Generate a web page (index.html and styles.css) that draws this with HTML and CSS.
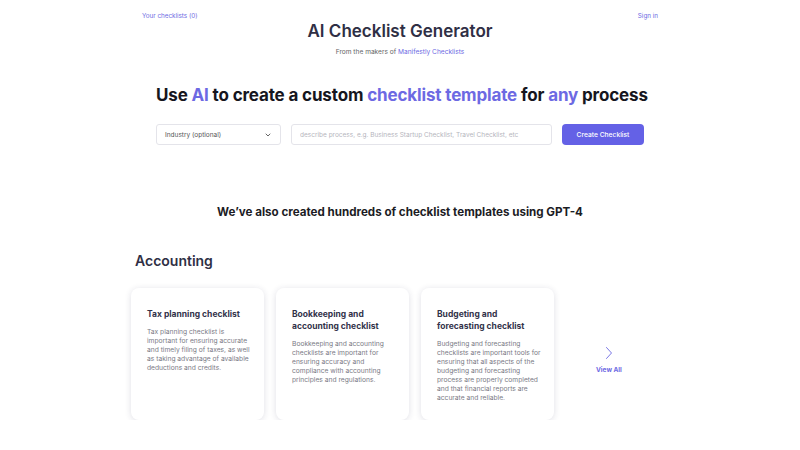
FILE: index.html
```html
<!doctype html>
<html>
<head>
    <meta charset="UTF-8">
    <title>AI Checklist Generator</title>
    <link rel="stylesheet" href="styles.css">
</head>

<body>
<header class="top">
    <nav class="top-nav">
        <a href="#">Your checklists (0)</a>
        <a href="#">Sign in</a>
    </nav>
    <h1 class="site-title">AI Checklist Generator</h1>
    <p class="makers">From the makers of <a href="#">Manifestly Checklists</a></p>
</header>

<section class="hero">
    <h2 class="headline">Use <span class="hl">AI</span> to create a custom <span class="hl">checklist template</span> for <span class="hl">any</span> process</h2>
    <form class="generator">
        <div class="industry">
            <span>Industry (optional)</span>
            <svg width="8" height="8" viewBox="0 0 8 8"><path d="M2 3l2 2 2-2" fill="none" stroke="#555" stroke-width="0.9" stroke-linecap="round" stroke-linejoin="round"/></svg>
        </div>
        <input class="process" type="text" placeholder="describe process, e.g. Business Startup Checklist, Travel Checklist, etc">
        <button class="create" type="button">Create Checklist</button>
    </form>
</section>

<h3 class="templates-title">We’ve also created hundreds of checklist templates using GPT-4</h3>

<section class="category">
    <h4 class="category-name">Accounting</h4>
    <div class="category-row">
        <div class="card">
            <h5>Tax planning checklist</h5>
            <p>Tax planning checklist is important for ensuring accurate and timely filing of taxes, as well as taking advantage of available deductions and credits.</p>
        </div>
        <div class="card">
            <h5>Bookkeeping and accounting checklist</h5>
            <p>Bookkeeping and accounting checklists are important for ensuring accuracy and compliance with accounting principles and regulations.</p>
        </div>
        <div class="card">
            <h5>Budgeting and forecasting checklist</h5>
            <p>Budgeting and forecasting checklists are important tools for ensuring that all aspects of the budgeting and forecasting process are properly completed and that financial reports are accurate and reliable.</p>
        </div>
        <a class="view-all" href="#">
            <svg width="10" height="14" viewBox="0 0 10 14"><path d="M2.5 1.5l5 5.5-5 5.5" fill="none" stroke="#7b78e6" stroke-width="1" stroke-linecap="round" stroke-linejoin="round"/></svg>
            <span>View All</span>
        </a>
    </div>
</section>

</body>
</html>
```

FILE: styles.css
```css
body {
    margin: 0;
    font-family: Inter, "Open Sans", sans-serif;
    color: #2b2b3a;
    background-color: white;
}
a {
    color: #6d69e3;
    text-decoration: none;
}
.top {
    width: 516px;
    margin: 0 auto;
    padding-top: 11px;
    text-align: center;
}
.top-nav {
    display: flex;
    justify-content: space-between;
    font-size: 6.3px;
    line-height: 10px;
}
.site-title {
    margin: 0;
    font-size: 17px;
    font-weight: 600;
    line-height: 20px;
    color: #2f2f45;
}
.makers {
    margin: 6px 0 0;
    font-size: 6.6px;
    line-height: 10px;
    color: #666;
}
.hero {
    width: 488px;
    margin: 0 auto;
    padding-top: 27px;
}
.headline {
    margin: 0;
    font-size: 17px;
    font-weight: 700;
    line-height: 22px;
    text-align: center;
    color: #16161e;
    white-space: nowrap;
    letter-spacing: -0.15px;
}
.headline .hl {
    color: #6d69e3;
}
.generator {
    display: flex;
    gap: 10px;
    margin-top: 18px;
    height: 21px;
}
.industry {
    width: 125px;
    box-sizing: border-box;
    display: flex;
    align-items: center;
    justify-content: space-between;
    padding: 0 8px;
    border: 1px solid #e4e4ea;
    border-radius: 3px;
    font-size: 6.5px;
    color: #555;
}
.process {
    flex: 1;
    box-sizing: border-box;
    margin: 0;
    padding: 0 8px;
    border: 1px solid #e4e4ea;
    border-radius: 3px;
    font-family: inherit;
    font-size: 6.5px;
}
.process::placeholder {
    color: #b5b5bd;
}
.create {
    width: 82px;
    border: none;
    border-radius: 4px;
    background-color: #6461e6;
    color: white;
    font-family: inherit;
    font-size: 6.7px;
    font-weight: 500;
}
.templates-title {
    margin: 59px 0 0;
    font-size: 11.6px;
    font-weight: 700;
    line-height: 16px;
    text-align: center;
    color: #1c1c24;
}
.category {
    width: 540px;
    margin: 0 auto;
    padding-top: 32px;
}
.category-name {
    margin: 0 0 0 5px;
    font-size: 14px;
    font-weight: 600;
    line-height: 18px;
    color: #2f2f45;
}
.category-row {
    display: flex;
    align-items: center;
    gap: 12px;
    margin-top: 18px;
    padding-left: 1px;
}
.card {
    width: 133px;
    height: 132px;
    box-sizing: border-box;
    padding: 20px 9px 0 16px;
    border-radius: 8px;
    background-color: white;
    box-shadow: 0 1px 6px rgba(40, 40, 80, 0.15);
}
.card h5 {
    margin: 0;
    font-size: 8.5px;
    font-weight: 700;
    line-height: 12px;
    color: #33334a;
}
.card p {
    margin: 8px 0 0;
    font-size: 6.7px;
    line-height: 9px;
    color: #7a7a85;
}
.view-all {
    display: flex;
    flex-direction: column;
    align-items: center;
    gap: 6px;
    margin: 12px 0 0 30px;
    font-size: 6.5px;
    font-weight: 700;
    color: #6d69e3;
}
```
